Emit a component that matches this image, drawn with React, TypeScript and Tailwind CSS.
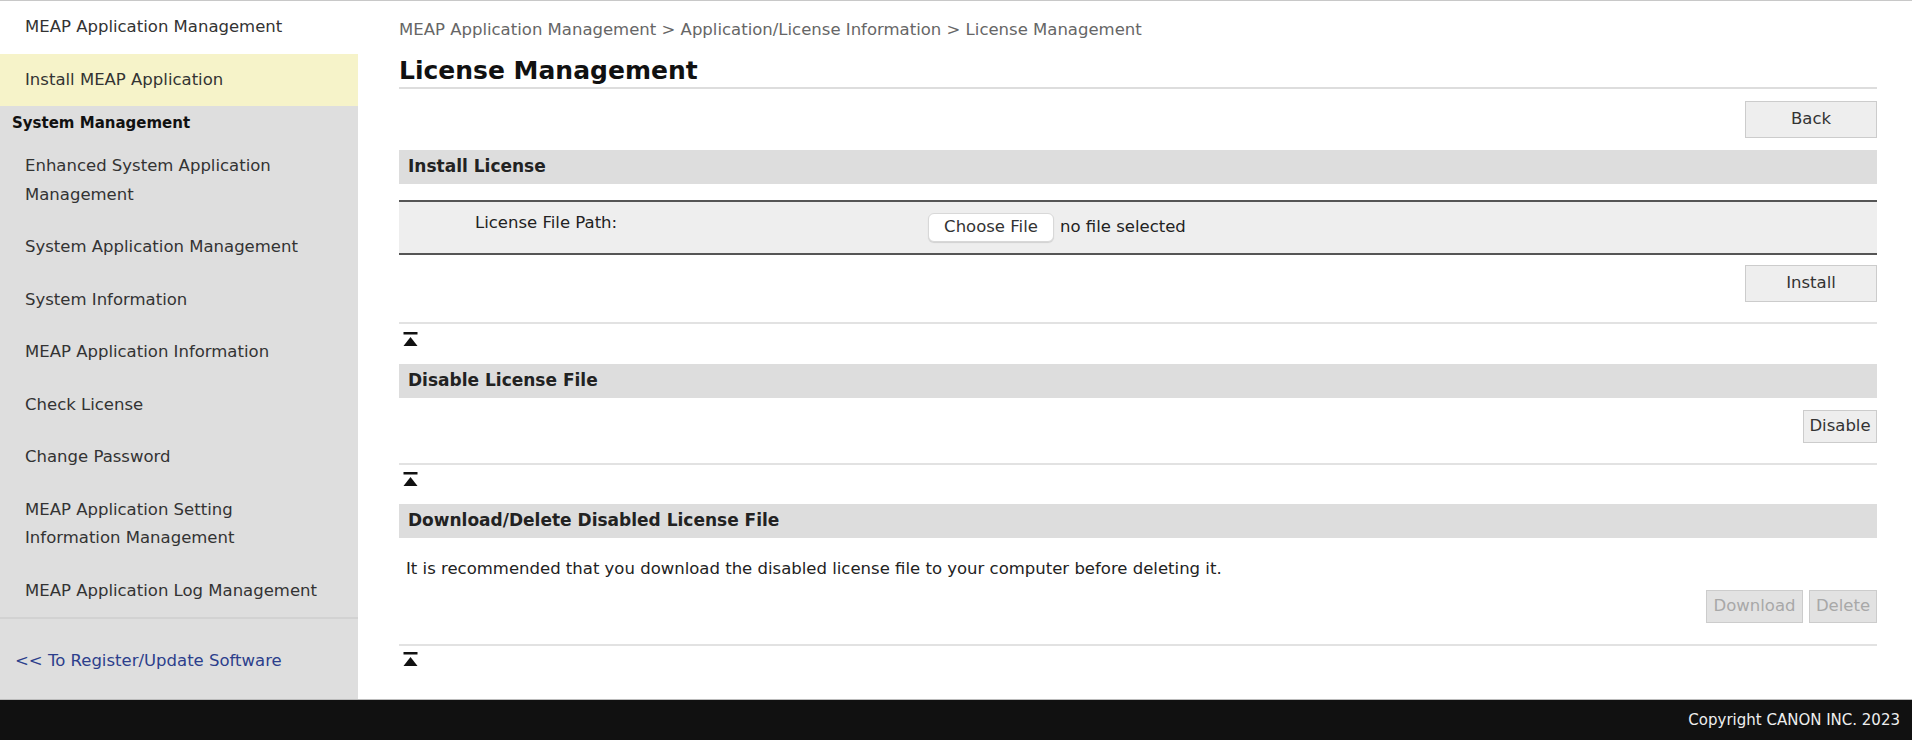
import React from 'react';

const TopIcon: React.FC = () => (
  <svg width="15" height="15" viewBox="0 0 15 15" className="block">
    <rect x="0.5" y="0" width="14" height="2.5" fill="#111" />
    <polygon points="7.5,5 14.5,14 0.5,14" fill="#111" />
  </svg>
);

const SectionBar: React.FC<{ title: string; className?: string }> = ({ title, className }) => (
  <div className={`h-[34px] bg-[#dddddd] pl-[9px] flex items-center font-bold text-[17px] text-[#222] ${className ?? ''}`}>
    {title}
  </div>
);

const Btn: React.FC<{ label: string; className?: string; disabled?: boolean }> = ({ label, className, disabled }) => (
  <button
    disabled={disabled}
    className={`border border-[#cccccc] flex items-center justify-center ${
      disabled ? 'bg-[#e2e2e2] text-[#a8a8a8]' : 'bg-[#eeeeee] text-[#333]'
    } ${className ?? ''}`}
  >
    {label}
  </button>
);

const navItems: React.ReactNode[] = [
  <>Enhanced System Application<br />Management</>,
  'System Application Management',
  'System Information',
  'MEAP Application Information',
  'Check License',
  'Change Password',
  <>MEAP Application Setting<br />Information Management</>,
  'MEAP Application Log Management',
];

const App: React.FC = () => {
  return (
    <div className="h-[740px] flex flex-col bg-white text-[16.5px] font-['DejaVu_Sans',sans-serif] overflow-hidden">
      <div className="flex-1 flex border-t border-[#c8c8c8] min-h-0">
        {/* Sidebar */}
        <aside className="w-[358px] shrink-0 bg-[#dedede] flex flex-col">
          <div className="h-[53px] bg-white pl-[25px] flex items-center text-[#333]">MEAP Application Management</div>
          <div className="h-[52px] bg-[#f6f3c9] pl-[25px] flex items-center text-[#333]">Install MEAP Application</div>
          <div className="h-[34px] pl-[12px] flex items-center font-bold text-[15px] text-[#111]">System Management</div>
          {navItems.map((label, i) => (
            <div key={i} className="pl-[25px] py-3 leading-[28.5px] text-[#333]">
              {label}
            </div>
          ))}
          <div className="border-t-2 border-[#d2d2d2] flex-1 pl-[15px] pt-[30px]">
            <span className="text-[#2c3e8c]">&lt;&lt; To Register/Update Software</span>
          </div>
        </aside>

        {/* Main */}
        <main className="flex-1 pl-[41px] pr-[35px]">
          <div className="pt-[18px] leading-[22px] text-[#666]">
            MEAP Application Management &gt; Application/License Information &gt; License Management
          </div>
          <h1 className="mt-[15px] text-[25px] leading-[30px] font-bold text-[#111] pb-[1px] border-b-2 border-[#dddddd]">
            License Management
          </h1>

          <div className="mt-[12px] flex justify-end">
            <Btn label="Back" className="w-[132px] h-[37px]" />
          </div>

          <SectionBar title="Install License" className="mt-[12px]" />
          <div className="mt-[16px] border-y-2 border-[#555] bg-[#eeeeee] h-[55px] flex items-center text-[#222]">
            <div className="w-[529px] pl-[76px] -mt-[8px]">License File Path:</div>
            <div className="flex items-center">
              <span className="h-[29px] w-[126px] bg-white rounded-[6px] border border-[#d8d8d8] shadow-[0_1px_1px_rgba(0,0,0,0.12)] flex items-center justify-center text-[#333]">
                Choose File
              </span>
              <span className="ml-[6px] text-[#222]">no file selected</span>
            </div>
          </div>
          <div className="mt-[10px] flex justify-end">
            <Btn label="Install" className="w-[132px] h-[37px]" />
          </div>
          <div className="mt-[20px] border-t-2 border-[#e2e2e2]" />
          <div className="mt-[8px] pl-[4px]">
            <TopIcon />
          </div>

          <SectionBar title="Disable License File" className="mt-[17px]" />
          <div className="mt-[12px] flex justify-end">
            <Btn label="Disable" className="w-[74px] h-[33px]" />
          </div>
          <div className="mt-[20px] border-t-2 border-[#e2e2e2]" />
          <div className="mt-[7px] pl-[4px]">
            <TopIcon />
          </div>

          <SectionBar title="Download/Delete Disabled License File" className="mt-[17px]" />
          <div className="mt-[20px] pl-[7px] leading-[22px] text-[#222]">
            It is recommended that you download the disabled license file to your computer before deleting it.
          </div>
          <div className="mt-[10px] flex justify-end gap-[6px]">
            <Btn label="Download" disabled className="w-[97px] h-[33px]" />
            <Btn label="Delete" disabled className="w-[68px] h-[33px]" />
          </div>
          <div className="mt-[21px] border-t-2 border-[#e2e2e2]" />
          <div className="mt-[6px] pl-[4px]">
            <TopIcon />
          </div>
        </main>
      </div>

      <footer className="h-[41px] shrink-0 bg-[#111111] border-t border-[#bbbbbb] flex items-center justify-end pr-[12px] text-[15px] text-[#eeeeee]">
        Copyright CANON INC. 2023
      </footer>
    </div>
  );
};

export default App;
